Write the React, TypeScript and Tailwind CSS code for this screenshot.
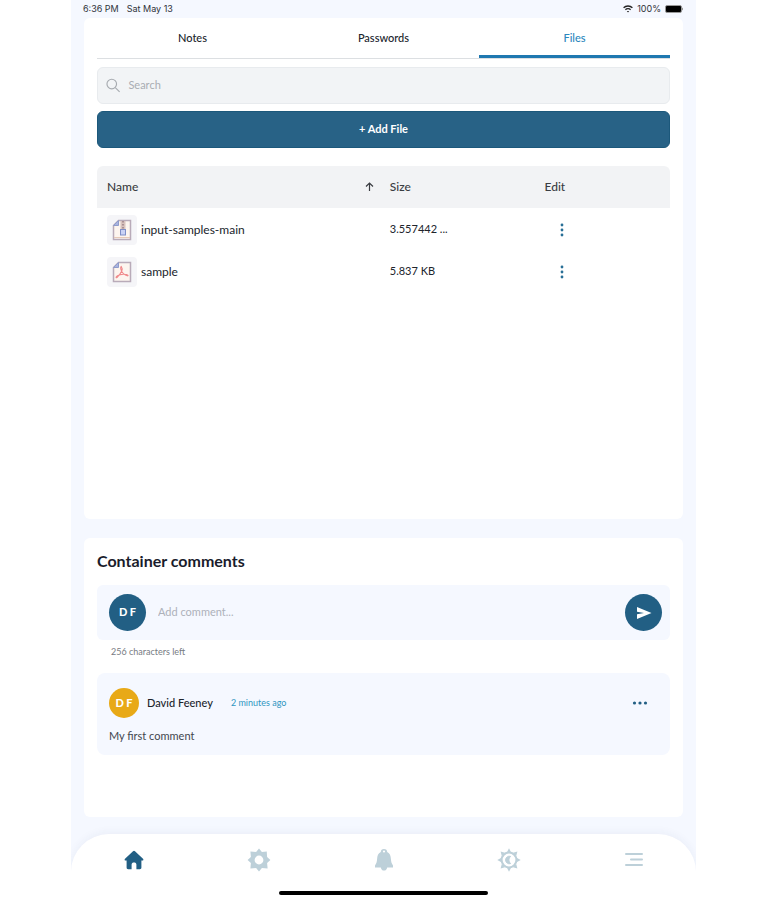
import React, { useState } from 'react';

interface FileRow {
  id: string;
  name: string;
  size: string;
  kind: 'zip' | 'pdf';
}

const tabs = ['Notes', 'Passwords', 'Files'];

const files: FileRow[] = [
  { id: '1', name: 'input-samples-main', size: '3.557442 ...', kind: 'zip' },
  { id: '2', name: 'sample', size: '5.837 KB', kind: 'pdf' },
];

const MAX_LENGTH = 256;

const FileIcon: React.FC<{ kind: 'zip' | 'pdf' }> = ({ kind }) => (
  <span className="flex h-[30px] w-[30px] shrink-0 items-center justify-center rounded bg-[#f5f5f8]">
    <svg width="20" height="22" viewBox="0 0 20 22" fill="none">
      <path d="M6.5 1.5H18.5V20.5H1.5V6.5Z" fill="#fdf5ef" stroke="#b9abb9" strokeWidth="1.5" />
      <path d="M6.5 1.5V6.5H1.5Z" fill="#a9b4e0" stroke="#8f9ccb" />
      {kind === 'zip' ? (
        <>
          <path d="M8.5 2H13.5V11H8.5Z" fill="#d9c3bd" />
          <path d="M11 2V11" stroke="#9b8085" strokeWidth="1.5" strokeDasharray="1.5 1.5" />
          <rect x="8.5" y="10.5" width="5" height="5.5" fill="#c9d2f5" stroke="#7f8fc8" />
          <path d="M2 18.5H18" stroke="#e6c9b8" />
        </>
      ) : (
        <path
          d="M9.3 5.5C10.8 7.5 10 11.5 5 16.5C3.8 17.3 3.6 16 5.5 14.8C8.5 13.2 14.5 12.6 16 14.4C16 15.8 11.5 13.6 9.8 10.5C8.8 8.5 8.5 6 9.3 5.5Z"
          stroke="#f08a8c"
          strokeWidth="1.1"
        />
      )}
    </svg>
  </span>
);

const HomeIcon = () => (
  <svg width="20" height="20" viewBox="0 0 20 20" fill="#225f84">
    <path d="M10 .8C9.6 .8 9.3 1 9 1.3L1 8.7C.2 9.6.6 10.6 1.6 10.6H2.6V17.6C2.6 18.8 3.1 19.2 4.2 19.2H7.6V14.6C7.6 13 8.6 12.4 10 12.4S12.4 13 12.4 14.6V19.2H15.8C16.9 19.2 17.4 18.8 17.4 17.6V10.6H18.4C19.4 10.6 19.8 9.6 19 8.7L11 1.3C10.7 1 10.4 .8 10 .8Z" />
  </svg>
);

const GearIcon = () => (
  <svg width="24" height="24" viewBox="0 0 24 24" fill="#bdd0d9">
    <path
      fillRule="evenodd"
      d="M12 .6L14.9 3.9L19.8 3.4V4.2L20.1 9.1L23.4 12L20.1 14.9L20.6 20.6L14.9 20.1L12 23.4L9.1 20.1L3.4 20.6L3.9 14.9L.6 12L3.9 9.1L3.4 3.4L9.1 3.9ZM12 7.6A4.4 4.4 0 1 0 12 16.4A4.4 4.4 0 1 0 12 7.6Z"
    />
  </svg>
);

const BellIcon = () => (
  <svg width="20" height="24" viewBox="0 0 20 24" fill="#bdd0d9">
    <path
      fillRule="evenodd"
      d="M10 1C12 1 13.2 2.2 13.2 4C16 5.3 16.7 8 16.9 11C17.1 14 17.7 15.5 19 17.5V19.5H13.2C12.8 21.4 11.8 22.6 10 22.6S7.2 21.4 6.8 19.5H1V17.5C2.3 15.5 2.9 14 3.1 11C3.3 8 4 5.3 6.8 4C6.8 2.2 8 1 10 1ZM10 2.4A1.1 1.1 0 1 0 10 4.6A1.1 1.1 0 1 0 10 2.4Z"
    />
  </svg>
);

const ThemeIcon = () => (
  <svg width="24" height="24" viewBox="0 0 24 24" fill="none">
    <circle cx="12" cy="12" r="7.4" stroke="#bdd0d9" strokeWidth="2" />
    <path
      d="M12 .3L14.2 4.4H9.8ZM12 23.7L14.2 19.6H9.8ZM.3 12L4.4 9.8V14.2ZM23.7 12L19.6 9.8V14.2ZM3.6 3.6L8 4.8L4.8 8ZM20.4 3.6L19.2 8L16 4.8ZM3.6 20.4L4.8 16L8 19.2ZM20.4 20.4L16 19.2L19.2 16Z"
      fill="#bdd0d9"
    />
    <path d="M13.6 8.4A3.8 3.8 0 1 0 13.6 15.6A4.6 4.6 0 0 1 13.6 8.4Z" fill="#bdd0d9" stroke="#bdd0d9" strokeLinejoin="round" />
  </svg>
);

const MenuIcon = () => (
  <svg width="20" height="16" viewBox="0 0 20 16" stroke="#bdd0d9" strokeWidth="2" strokeLinecap="round">
    <path d="M2 2H18M7 7.5H18M2 13H18" />
  </svg>
);

const navItems = [
  { label: 'Home', icon: <HomeIcon /> },
  { label: 'Settings', icon: <GearIcon /> },
  { label: 'Notifications', icon: <BellIcon /> },
  { label: 'Theme', icon: <ThemeIcon /> },
  { label: 'Menu', icon: <MenuIcon /> },
];

const App: React.FC = () => {
  const [activeTab, setActiveTab] = useState('Files');
  const [search, setSearch] = useState('');
  const [comment, setComment] = useState('');

  return (
    <div className="min-h-screen bg-white pr-[70px] pl-[71px] font-[Lato,sans-serif] text-[#20242c]">
      <div className="flex min-h-screen flex-col overflow-hidden bg-[#f5f8ff]">
        <header className="flex h-[18px] items-center justify-between px-3 font-[Inter,sans-serif] text-[9px] text-[#30333a]">
          <div className="flex gap-2">
            <span>6:36 PM</span>
            <span>Sat May 13</span>
          </div>
          <div className="flex items-center gap-1">
            <svg width="10" height="8" viewBox="0 0 10 8" fill="none" stroke="#222" strokeWidth="1.3">
              <path d="M.6 2.8C3 .4 7 .4 9.4 2.8M2.4 4.7C3.8 3.3 6.2 3.3 7.6 4.7" />
              <path d="M3.8 6L5 7.4L6.2 6Z" fill="#222" stroke="none" />
            </svg>
            <span>100%</span>
            <svg width="19" height="8" viewBox="0 0 19 8">
              <rect x=".5" y=".5" width="16" height="7" rx="1.5" fill="#000" stroke="#999" />
              <path d="M17.5 2.8V5.2" stroke="#999" />
            </svg>
          </div>
        </header>

        <main className="flex flex-col gap-[19px] px-[13px]">
          <section className="min-h-[501px] rounded-md bg-white px-[13px]">
            <div role="tablist" className="flex h-[41px] border-b border-[#dcdfe2]">
              {tabs.map(tab => (
                <button
                  key={tab}
                  type="button"
                  role="tab"
                  aria-selected={tab === activeTab}
                  onClick={() => setActiveTab(tab)}
                  className={
                    tab === activeTab
                      ? 'flex-1 border-b-3 border-[#1f78b0] pt-1 text-[11px] font-medium text-[#2b87bd]'
                      : 'flex-1 border-b-3 border-transparent pt-1 text-[11px] font-medium'
                  }
                >
                  {tab}
                </button>
              ))}
            </div>

            <label className="mt-2 flex h-[37px] items-center gap-2 rounded-md border border-[#e8ebee] bg-[#f2f4f6] px-2">
              <svg width="15" height="15" viewBox="0 0 15 15" fill="none" stroke="#a7abb0" strokeWidth="1.2">
                <circle cx="6" cy="6" r="5" />
                <path d="M9.7 9.7L14.2 14.2" />
              </svg>
              <input
                type="text"
                aria-label="Search"
                placeholder="Search"
                value={search}
                onChange={e => setSearch(e.target.value)}
                className="w-full bg-transparent text-[11px] outline-none placeholder:text-[#a9adb3]"
              />
            </label>

            <button type="button" className="mt-[7px] h-[37px] w-full rounded-md border border-[#1c587b] bg-[#286286] text-[11px] font-bold text-white">
              + Add File
            </button>

            <table className="mt-[18px] w-full table-fixed text-left">
              <thead>
                <tr className="h-[42px] text-[12px] text-[#3a3d42]">
                  <th className="w-[49%] rounded-tl-md bg-[#f2f3f5] pl-[10px] font-medium">
                    <div className="flex items-center justify-between pr-1">
                      <span>Name</span>
                      <svg width="9" height="10" viewBox="0 0 9 10" fill="none" stroke="#3a3d42" strokeWidth="1.2">
                        <path d="M4.5 9V1M1 4.5L4.5 1L8 4.5" />
                      </svg>
                    </div>
                  </th>
                  <th className="w-[27%] bg-[#f2f3f5] pl-3 font-medium">Size</th>
                  <th className="w-[24%] rounded-tr-md bg-[#f2f3f5] pl-3 font-medium">Edit</th>
                </tr>
              </thead>
              <tbody>
                {files.map(file => (
                  <tr key={file.id} className="h-[42px] text-[12px]">
                    <td className="pt-px pl-[10px]">
                      <div className="flex items-center gap-1">
                        <FileIcon kind={file.kind} />
                        <span>{file.name}</span>
                      </div>
                    </td>
                    <td className="pt-px pl-3 text-[11px]">{file.size}</td>
                    <td className="pt-px pl-3">
                      <button type="button" aria-label={`Edit ${file.name}`} className="flex h-8 w-9 items-center justify-center">
                        <svg width="4" height="14" viewBox="0 0 4 14" fill="#286f96">
                          <circle cx="2" cy="2" r="1.4" />
                          <circle cx="2" cy="7" r="1.4" />
                          <circle cx="2" cy="12" r="1.4" />
                        </svg>
                      </button>
                    </td>
                  </tr>
                ))}
              </tbody>
            </table>
          </section>

          <section className="min-h-[279px] rounded-md bg-white px-[13px] pt-[11px]">
            <h2 className="text-[16px] leading-6 font-bold text-[#1a1c2c]">Container comments</h2>

            <div className="mt-3 flex h-[55px] items-center gap-3 rounded-md bg-[#f5f8ff] pr-2 pl-3">
              <span className="flex h-[37px] w-[37px] shrink-0 items-center justify-center rounded-full bg-[#225f84] text-[11px] font-black text-white">
                D F
              </span>
              <input
                type="text"
                aria-label="Add comment"
                placeholder="Add comment..."
                maxLength={MAX_LENGTH}
                value={comment}
                onChange={e => setComment(e.target.value)}
                className="min-w-0 flex-1 bg-transparent text-[11px] outline-none placeholder:text-[#adb1ba]"
              />
              <button type="button" aria-label="Send" className="flex h-[37px] w-[37px] shrink-0 items-center justify-center rounded-full bg-[#225f84]">
                <svg width="16" height="14" viewBox="0 0 16 14" fill="#fff">
                  <path d="M1 1L15.5 7L1 13V8.3L8 7L1 5.7Z" />
                </svg>
              </button>
            </div>
            <p className="mt-1 pl-[14px] text-[9px] leading-4 text-[#777b82]">{MAX_LENGTH - comment.length} characters left</p>

            <article className="mt-[13px] rounded-lg bg-[#f5f8ff] px-3 pt-[15px] pb-[11px]">
              <div className="flex items-center">
                <span className="flex h-[30px] w-[30px] shrink-0 items-center justify-center rounded-full bg-[#e8a917] text-[11px] font-black text-white">
                  D F
                </span>
                <span className="ml-2 text-[11px] font-medium">David Feeney</span>
                <span className="ml-[18px] text-[9px] text-[#2f96bf]">2 minutes ago</span>
                <button type="button" aria-label="Comment options" className="ml-auto flex h-6 w-9 items-center justify-center">
                  <svg width="16" height="4" viewBox="0 0 16 4" fill="#225f84">
                    <circle cx="2.5" cy="2" r="1.6" />
                    <circle cx="8" cy="2" r="1.6" />
                    <circle cx="13.5" cy="2" r="1.6" />
                  </svg>
                </button>
              </div>
              <p className="mt-[10px] text-[11px] leading-4 text-[#42464e]">My first comment</p>
            </article>
          </section>
        </main>

        <footer className="mt-[17px] flex flex-1 flex-col rounded-t-[38px] bg-white shadow-[0_-2px_8px_rgba(40,60,120,0.05)]">
          <nav className="flex h-[52px]">
            {navItems.map(item => (
              <a key={item.label} href="#" aria-label={item.label} className="flex flex-1 items-center justify-center">
                {item.icon}
              </a>
            ))}
          </nav>
          <div className="mx-auto mt-[5px] h-1 w-1/3 rounded-full bg-black" />
        </footer>
      </div>
    </div>
  );
};

export default App;
